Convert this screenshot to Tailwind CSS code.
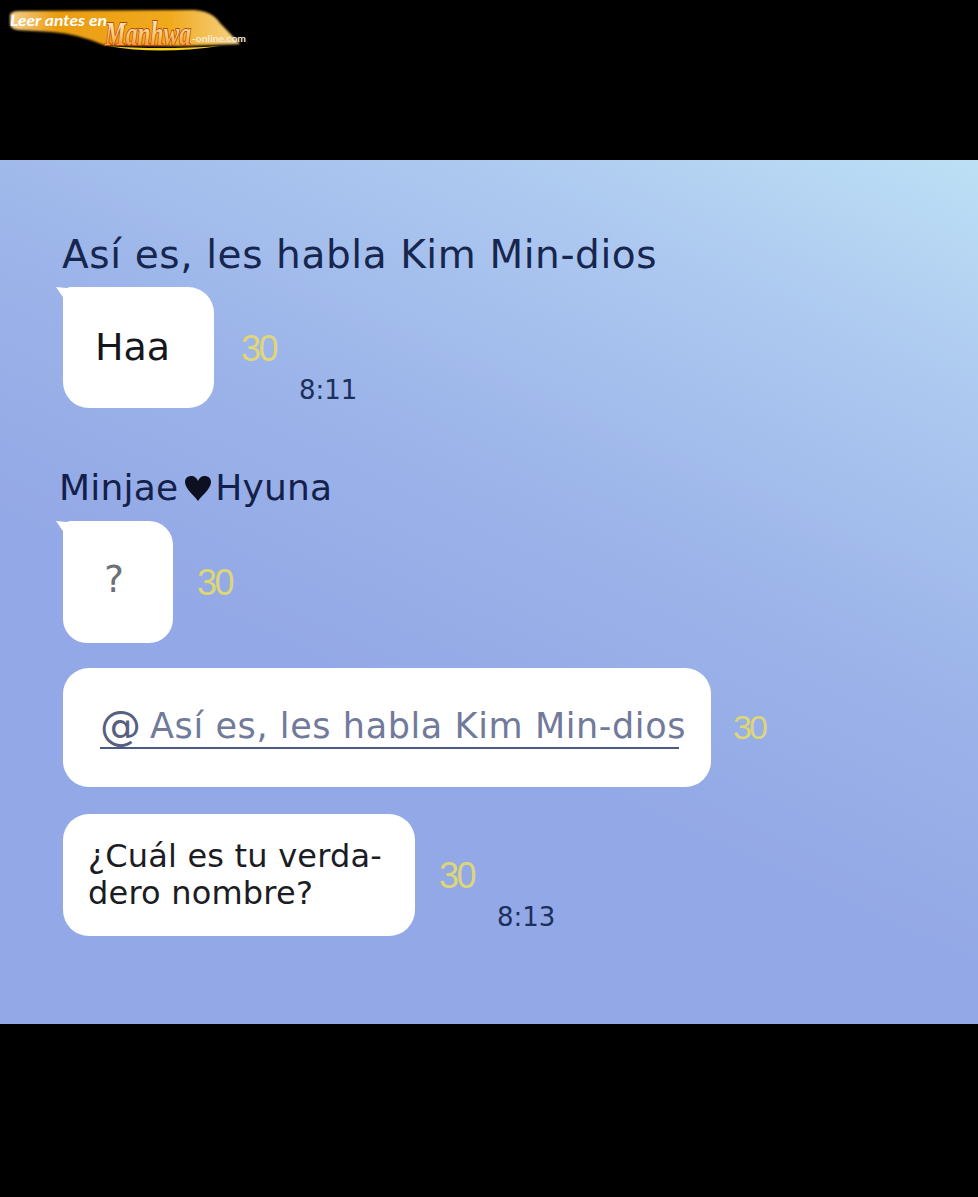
<!DOCTYPE html>
<html lang="es">
<head>
  <meta charset="UTF-8" />
  <meta name="viewport" content="width=device-width, initial-scale=1" />
  <title>Chat</title>
  <script src="https://cdn.jsdelivr.net/npm/@tailwindcss/browser@4"></script>
</head>
<body class="bg-black min-h-screen font-['DejaVu_Sans','Inter',sans-serif]">

  <!-- Logo -->
  <header class="h-[160px] pl-[8px] pt-[8px]">
    <svg width="242" height="48" viewBox="0 0 242 48" class="block">
      <defs>
        <linearGradient id="franja" x1="0" y1="0" x2="1" y2="0">
          <stop offset="0" stop-color="#f4cf8e" />
          <stop offset="0.2" stop-color="#eb9d10" />
          <stop offset="0.7" stop-color="#f0aa1e" />
          <stop offset="1" stop-color="#f7d48a" />
        </linearGradient>
        <linearGradient id="letras" x1="0" y1="0" x2="0" y2="1">
          <stop offset="0" stop-color="#fff8e8" />
          <stop offset="0.55" stop-color="#fbc46a" />
          <stop offset="1" stop-color="#ee7a1a" />
        </linearGradient>
        <filter id="brillo" x="-5%" y="-20%" width="110%" height="140%">
          <feGaussianBlur stdDeviation="1" />
        </filter>
      </defs>
      <path d="M2 7 Q3 3 12 3 L186 2 Q204 3 212 15 L232 36 L170 38 L96 37 Q70 26 44 24 L10 22 Q2 21 2 16 Z" fill="url(#franja)" filter="url(#brillo)" />
      <path d="M100 38 Q150 47 212 38 Q150 42 100 38 Z" fill="#f4d020" />
      <text x="2" y="18" font-family="Lato" font-size="16" font-weight="700" font-style="italic" textLength="97" lengthAdjust="spacingAndGlyphs" fill="#fff">Leer antes en</text>
      <text transform="translate(97 37) scale(0.71 1)" font-family="Liberation Serif" font-size="33" font-weight="700" font-style="italic" fill="url(#letras)" stroke="#b8480c" stroke-width="1.8" paint-order="stroke">Manhwa</text>
      <text x="184" y="34" font-family="Lato" font-size="10" font-weight="700" fill="#f4ead6" textLength="54" lengthAdjust="spacingAndGlyphs">-online.com</text>
    </svg>
  </header>

  <!-- Conversacion -->
  <main class="h-[864px] pl-[63px] pt-[70px] bg-[linear-gradient(205deg,#bde0f5_0%,#adc9f0_18%,#9bb3e9_42%,#93a8e6_62%,#93a8e6_100%)]">
    <h2 class="-ml-px h-[48px] pt-px text-[39px] leading-[48px] tracking-[0.6px] whitespace-nowrap text-[#17264e]">Así es, les habla Kim Min-dios</h2>

    <div class="mt-[9px] flex">
      <div class="relative flex h-[121px] w-[151px] items-center pl-[32px] rounded-[26px] rounded-tl-[8px] bg-white text-[38px] text-[#15161c]">
        <span class="absolute -left-[7px] top-0 h-[14px] w-[16px] bg-white [clip-path:polygon(0_0,100%_10%,100%_100%,60%_100%)]"></span>
        Haa
      </div>
      <div class="ml-[27px] flex flex-col pt-[40px]">
        <span class="text-[36px] leading-[44px] tracking-[-2.5px] font-['Liberation_Sans'] text-[#e0d678]">30</span>
        <span class="ml-[58px] mt-[1px] text-[26px] leading-[36px] text-[#1d2f5c]">8:11</span>
      </div>
    </div>

    <h2 class="mt-[54px] -ml-[4px] flex h-[48px] items-center pt-[3px] text-[36px] tracking-[0.2px] text-[#12204a]">
      Minjae<svg width="28" height="26" viewBox="0 0 28 26" class="ml-[6px] mr-[3px] mt-[1px]"><path d="M14 26 C10 20 1 14 1 7 C1 3 4 1 7.5 1 C10.5 1 13 3 14 6 C15 3 17.5 1 20.5 1 C24 1 27 3 27 7 C27 14 18 20 14 26 Z" fill="#0c1020" /></svg>Hyuna
    </h2>

    <div class="mt-[11px] flex">
      <div class="relative flex h-[122px] w-[110px] items-center justify-center rounded-[24px] rounded-tl-[8px] bg-white pr-[8px] pb-[4px] text-[37px] text-[#6e7077]">
        <span class="absolute -left-[7px] top-0 h-[14px] w-[16px] bg-white [clip-path:polygon(0_0,100%_10%,100%_100%,60%_100%)]"></span>
        ?
      </div>
      <span class="ml-[24px] mt-[40px] text-[36px] leading-[44px] tracking-[-2.5px] font-['Liberation_Sans'] text-[#dcd678]">30</span>
    </div>

    <div class="mt-[25px] flex">
      <div class="h-[119px] w-[648px] rounded-[26px] bg-white pl-[37px] pt-[33px]">
        <div class="flex h-[48px] w-[579px] items-center border-b-2 border-[#4c5a84] pt-[4px] whitespace-nowrap text-[35px] tracking-[0.6px] text-[#717a9a]">
          <span class="mr-[9px] text-[41px] leading-[44px] tracking-normal text-[#56607f]">@</span>Así es, les habla Kim Min-dios
        </div>
      </div>
      <span class="ml-[22px] mt-[37px] text-[34px] leading-[44px] tracking-[-3px] font-['Liberation_Sans'] text-[#dcd678]">30</span>
    </div>

    <div class="mt-[27px] flex">
      <div class="h-[122px] w-[352px] rounded-[26px] bg-white pl-[25px] pt-[24px] text-[32px] leading-[37px] tracking-[0.2px] text-[#1b1c24]">
        <p>¿Cuál es tu verda-</p>
        <p>dero nombre?</p>
      </div>
      <div class="ml-[24px] flex flex-col pt-[40px]">
        <span class="text-[36px] leading-[44px] tracking-[-2.5px] font-['Liberation_Sans'] text-[#dcd678]">30</span>
        <span class="ml-[58px] mt-[1px] text-[26px] leading-[36px] text-[#1d2f5c]">8:13</span>
      </div>
    </div>
  </main>

  <footer class="h-[173px]"></footer>
</body>
</html>
